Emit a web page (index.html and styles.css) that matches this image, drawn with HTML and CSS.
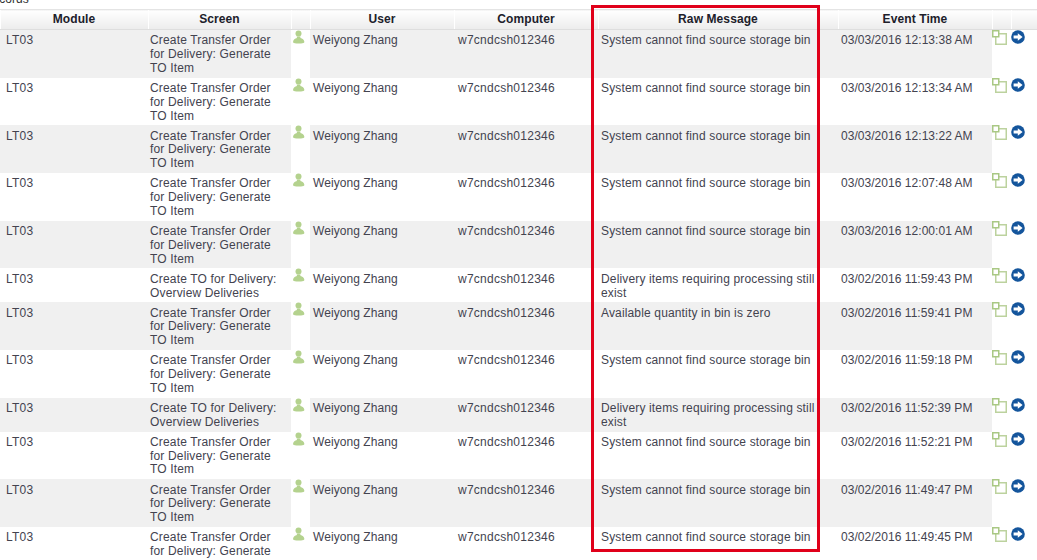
FILE: index.html
```html
<!DOCTYPE html>
<html lang="en">
<head>
<meta charset="utf-8">
<title>Records</title>
<link rel="stylesheet" href="styles.css">
</head>
<body>
<svg class="defs" width="0" height="0" aria-hidden="true">
  <symbol id="i-user" viewBox="0 0 13 15">
    <circle cx="6.5" cy="3.6" r="3" fill="#b4d28e"/>
    <path d="M4.6 6.5h3.8v1.6c2.2.5 3.6 1.6 3.9 3.4.1.7-.1 1.3-.8 1.5-3.2.7-6.6.7-9.6 0-.7-.2-.9-.8-.8-1.5.3-1.8 1.7-2.9 3.9-3.4z" fill="#b4d28e"/>
  </symbol>
  <symbol id="i-box" viewBox="0 0 15 15">
    <rect x="3.75" y="3.75" width="10.5" height="10.5" fill="#fff" stroke="#bcd29e" stroke-width="1.5"/>
    <rect x=".75" y=".75" width="6" height="6" fill="#fff" stroke="#a9c884" stroke-width="1.5"/>
  </symbol>
  <symbol id="i-go" viewBox="0 0 14 14">
    <circle cx="7" cy="7" r="6.8" fill="#14559c"/>
    <path d="M2.6 5.6h4.2V3.2L11.6 7 6.8 10.8V8.4H2.6z" fill="#fff"/>
  </symbol>
</svg>
<div class="caption">Records</div>
<table class="grid">
  <colgroup>
    <col class="c-module"><col class="c-screen"><col class="c-uicon"><col class="c-user"><col class="c-computer"><col class="c-raw"><col class="c-time"><col class="c-a1"><col class="c-a2">
  </colgroup>
  <thead>
    <tr><th>Module</th><th>Screen</th><th></th><th>User</th><th>Computer</th><th>Raw Message</th><th>Event Time</th><th></th><th></th></tr>
  </thead>
  <tbody>
    <tr class="odd"><td class="mod">LT03</td><td class="scr">Create Transfer Order for Delivery: Generate TO Item</td><td class="ic"><svg class="u"><use href="#i-user"/></svg></td><td class="usr">Weiyong Zhang</td><td class="cmp">w7cndcsh012346</td><td class="raw">System cannot find source storage bin</td><td class="tim">03/03/2016 12:13:38 AM</td><td class="ic"><svg class="b"><use href="#i-box"/></svg></td><td class="ic"><svg class="g"><use href="#i-go"/></svg></td></tr>
    <tr><td class="mod">LT03</td><td class="scr">Create Transfer Order for Delivery: Generate TO Item</td><td class="ic"><svg class="u"><use href="#i-user"/></svg></td><td class="usr">Weiyong Zhang</td><td class="cmp">w7cndcsh012346</td><td class="raw">System cannot find source storage bin</td><td class="tim">03/03/2016 12:13:34 AM</td><td class="ic"><svg class="b"><use href="#i-box"/></svg></td><td class="ic"><svg class="g"><use href="#i-go"/></svg></td></tr>
    <tr class="odd"><td class="mod">LT03</td><td class="scr">Create Transfer Order for Delivery: Generate TO Item</td><td class="ic"><svg class="u"><use href="#i-user"/></svg></td><td class="usr">Weiyong Zhang</td><td class="cmp">w7cndcsh012346</td><td class="raw">System cannot find source storage bin</td><td class="tim">03/03/2016 12:13:22 AM</td><td class="ic"><svg class="b"><use href="#i-box"/></svg></td><td class="ic"><svg class="g"><use href="#i-go"/></svg></td></tr>
    <tr><td class="mod">LT03</td><td class="scr">Create Transfer Order for Delivery: Generate TO Item</td><td class="ic"><svg class="u"><use href="#i-user"/></svg></td><td class="usr">Weiyong Zhang</td><td class="cmp">w7cndcsh012346</td><td class="raw">System cannot find source storage bin</td><td class="tim">03/03/2016 12:07:48 AM</td><td class="ic"><svg class="b"><use href="#i-box"/></svg></td><td class="ic"><svg class="g"><use href="#i-go"/></svg></td></tr>
    <tr class="odd"><td class="mod">LT03</td><td class="scr">Create Transfer Order for Delivery: Generate TO Item</td><td class="ic"><svg class="u"><use href="#i-user"/></svg></td><td class="usr">Weiyong Zhang</td><td class="cmp">w7cndcsh012346</td><td class="raw">System cannot find source storage bin</td><td class="tim">03/03/2016 12:00:01 AM</td><td class="ic"><svg class="b"><use href="#i-box"/></svg></td><td class="ic"><svg class="g"><use href="#i-go"/></svg></td></tr>
    <tr><td class="mod">LT03</td><td class="scr">Create TO for Delivery: Overview Deliveries</td><td class="ic"><svg class="u"><use href="#i-user"/></svg></td><td class="usr">Weiyong Zhang</td><td class="cmp">w7cndcsh012346</td><td class="raw">Delivery items requiring processing still exist</td><td class="tim">03/02/2016 11:59:43 PM</td><td class="ic"><svg class="b"><use href="#i-box"/></svg></td><td class="ic"><svg class="g"><use href="#i-go"/></svg></td></tr>
    <tr class="odd"><td class="mod">LT03</td><td class="scr">Create Transfer Order for Delivery: Generate TO Item</td><td class="ic"><svg class="u"><use href="#i-user"/></svg></td><td class="usr">Weiyong Zhang</td><td class="cmp">w7cndcsh012346</td><td class="raw">Available quantity in bin is zero</td><td class="tim">03/02/2016 11:59:41 PM</td><td class="ic"><svg class="b"><use href="#i-box"/></svg></td><td class="ic"><svg class="g"><use href="#i-go"/></svg></td></tr>
    <tr><td class="mod">LT03</td><td class="scr">Create Transfer Order for Delivery: Generate TO Item</td><td class="ic"><svg class="u"><use href="#i-user"/></svg></td><td class="usr">Weiyong Zhang</td><td class="cmp">w7cndcsh012346</td><td class="raw">System cannot find source storage bin</td><td class="tim">03/02/2016 11:59:18 PM</td><td class="ic"><svg class="b"><use href="#i-box"/></svg></td><td class="ic"><svg class="g"><use href="#i-go"/></svg></td></tr>
    <tr class="odd"><td class="mod">LT03</td><td class="scr">Create TO for Delivery: Overview Deliveries</td><td class="ic"><svg class="u"><use href="#i-user"/></svg></td><td class="usr">Weiyong Zhang</td><td class="cmp">w7cndcsh012346</td><td class="raw">Delivery items requiring processing still exist</td><td class="tim">03/02/2016 11:52:39 PM</td><td class="ic"><svg class="b"><use href="#i-box"/></svg></td><td class="ic"><svg class="g"><use href="#i-go"/></svg></td></tr>
    <tr><td class="mod">LT03</td><td class="scr">Create Transfer Order for Delivery: Generate TO Item</td><td class="ic"><svg class="u"><use href="#i-user"/></svg></td><td class="usr">Weiyong Zhang</td><td class="cmp">w7cndcsh012346</td><td class="raw">System cannot find source storage bin</td><td class="tim">03/02/2016 11:52:21 PM</td><td class="ic"><svg class="b"><use href="#i-box"/></svg></td><td class="ic"><svg class="g"><use href="#i-go"/></svg></td></tr>
    <tr class="odd"><td class="mod">LT03</td><td class="scr">Create Transfer Order for Delivery: Generate TO Item</td><td class="ic"><svg class="u"><use href="#i-user"/></svg></td><td class="usr">Weiyong Zhang</td><td class="cmp">w7cndcsh012346</td><td class="raw">System cannot find source storage bin</td><td class="tim">03/02/2016 11:49:47 PM</td><td class="ic"><svg class="b"><use href="#i-box"/></svg></td><td class="ic"><svg class="g"><use href="#i-go"/></svg></td></tr>
    <tr><td class="mod">LT03</td><td class="scr">Create Transfer Order for Delivery: Generate TO Item</td><td class="ic"><svg class="u"><use href="#i-user"/></svg></td><td class="usr">Weiyong Zhang</td><td class="cmp">w7cndcsh012346</td><td class="raw">System cannot find source storage bin</td><td class="tim">03/02/2016 11:49:45 PM</td><td class="ic"><svg class="b"><use href="#i-box"/></svg></td><td class="ic"><svg class="g"><use href="#i-go"/></svg></td></tr>
  </tbody>
</table>
<div class="highlight"></div>
</body>
</html>
```
FILE: styles.css
```css
html, body {
  margin: 0;
  padding: 0;
  height: 560px;
  overflow: hidden;
  background: #fff;
}
body {
  position: relative;
  font-family: "Liberation Sans", Arial, sans-serif;
  font-size: 12px;
  color: #43434f;
}
.defs {
  position: absolute;
}
.caption {
  height: 10px;
  margin-top: -1px;
  line-height: 0;
  margin-left: -16px;
  font-size: 12px;
  color: #333;
}
.grid {
  width: 1037px;
  table-layout: fixed;
  border-collapse: collapse;
  border-spacing: 0;
}
.c-module { width: 148px; }
.c-screen { width: 143px; }
.c-uicon { width: 19px; }
.c-user { width: 144px; }
.c-computer { width: 144px; }
.c-raw { width: 240px; }
.c-time { width: 154px; }
.c-a1 { width: 19px; }
.c-a2 { width: 26px; }
th {
  height: 18px;
  padding: 0 0 1px;
  font-size: 12px;
  font-weight: bold;
  letter-spacing: .1px;
  color: #20202a;
  text-align: center;
  background: linear-gradient(#fff, #ececec);
  border-top: 1px solid #e4e4e4;
  border-bottom: 1px solid #dedede;
  box-shadow: inset 1px 0 0 #fff;
}
td {
  padding: 4.3px 3px 2px;
  line-height: 13.8px;
  vertical-align: top;
}
td.mod {
  padding-left: 6px;
  letter-spacing: .2px;
}
td.scr {
  padding-left: 2px;
  padding-right: 10px;
  letter-spacing: .16px;
}
td.usr {
  letter-spacing: .07px;
}
td.cmp {
  padding-left: 4px;
  letter-spacing: .25px;
}
td.raw {
  padding-left: 3px;
  padding-right: 19px;
  letter-spacing: .15px;
}
td.tim {
  letter-spacing: .04px;
}
.odd td {
  background: #f0f0f0;
}
.odd td.ic, td.ic {
  background: #fff;
  padding: 0;
}
svg.u {
  display: block;
  width: 13px;
  height: 15px;
  margin-left: 1px;
}
svg.b {
  display: block;
  width: 15px;
  height: 15px;
}
svg.g {
  display: block;
  width: 14px;
  height: 14px;
}
.highlight {
  position: absolute;
  left: 591px;
  top: 5px;
  width: 223px;
  height: 541px;
  border: 3px solid #e0001a;
}
```
